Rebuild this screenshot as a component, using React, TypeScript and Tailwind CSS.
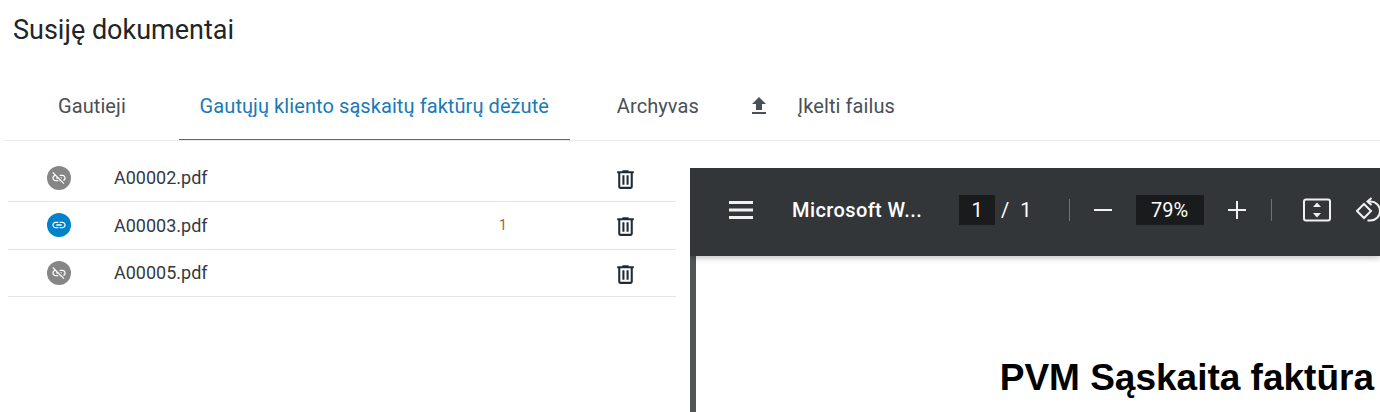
import React from "react";

const linkPath =
  "M3.9 12c0-1.71 1.39-3.1 3.1-3.1h4V7H7c-2.76 0-5 2.24-5 5s2.24 5 5 5h4v-1.9H7c-1.71 0-3.1-1.39-3.1-3.1zM8 13h8v-2H8v2zm9-6h-4v1.9h4c1.71 0 3.1 1.39 3.1 3.1s-1.39 3.1-3.1 3.1h-4V17h4c2.76 0 5-2.24 5-5s-2.24-5-5-5z";
const linkOffPath =
  "M17 7h-4v1.9h4c1.71 0 3.1 1.39 3.1 3.1 0 1.43-.98 2.63-2.31 2.98l1.46 1.46C20.88 15.61 22 13.95 22 12c0-2.76-2.24-5-5-5zm-1 4h-2.19l2 2H16zM2 4.27l3.11 3.11C3.29 8.12 2 9.91 2 12c0 2.76 2.24 5 5 5h4v-1.9H7c-1.71 0-3.1-1.39-3.1-3.1 0-1.59 1.21-2.9 2.76-3.07L8.73 11H8v2h2.73L13 15.27V17h1.73l4.01 4L20 19.74 3.27 3 2 4.27z";

const files = [
  { name: "A00002.pdf", linked: false, count: "" },
  { name: "A00003.pdf", linked: true, count: "1" },
  { name: "A00005.pdf", linked: false, count: "" },
];

const FileRow = ({ file }: { file: (typeof files)[number] }) => (
  <div className="flex h-[47.5px] items-center border-b border-[#e4e4e4]">
    <div className="ml-[39px] w-[67px]">
      <div
        className={`flex h-6 w-6 items-center justify-center rounded-full ${
          file.linked ? "bg-[#0082ca]" : "bg-[#868686]"
        }`}
      >
        <svg viewBox="0 0 24 24" className="h-4 w-4" fill="#fff">
          <path d={file.linked ? linkPath : linkOffPath} />
        </svg>
      </div>
    </div>
    <span className="w-[385px] text-[18px] text-[#343a40]">{file.name}</span>
    <span className="w-[114px] text-[14px] text-[#8a6d3b]">{file.count}</span>
    <svg viewBox="0 0 24 24" className="mt-[3px] h-[25px] w-[25px]" fill="#212b36">
      <path d="M9,3V4H4V6H5V19A2,2 0 0,0 7,21H17A2,2 0 0,0 19,19V6H20V4H15V3H9M7,6H17V19H7V6M9,8V17H11V8H9M13,8V17H15V8H13Z" />
    </svg>
  </div>
);

const PdfToolbar = () => (
  <div className="relative z-10 flex h-[88px] shrink-0 items-center bg-[#323639] pb-[4px] pl-[39px] text-white shadow-[0_2px_6px_rgba(0,0,0,0.25)]">
    <svg viewBox="0 0 24 24" className="h-6 w-6 shrink-0" fill="#f1f1f1">
      <path d="M0 3h24v3H0zM0 10.500h24v3H0zM0 18h24v3H0z" />
    </svg>
    <span className="ml-[39px] w-[164px] shrink-0 text-[20px] font-medium tracking-[0.4px] whitespace-nowrap">Microsoft W...</span>
    <span className="ml-[3px] flex h-[30px] w-9 shrink-0 items-center justify-center bg-[#191b1c] text-[20px]">1</span>
    <span className="ml-[6px] shrink-0 text-[20px]">/</span>
    <span className="ml-[11px] shrink-0 text-[20px]">1</span>
    <span className="ml-[37px] h-[22px] w-px shrink-0 bg-[#6f7275]" />
    <svg viewBox="0 0 20 20" className="ml-[23px] h-5 w-5 shrink-0" fill="#f1f1f1">
      <path d="M1 9h18v2H1z" />
    </svg>
    <span className="ml-[23px] flex h-[30px] w-[68px] shrink-0 items-center justify-center bg-[#191b1c] text-[20px]">79%</span>
    <svg viewBox="0 0 20 20" className="ml-[23px] h-5 w-5 shrink-0" fill="#f1f1f1">
      <path d="M1 9h8V1h2v8h8v2h-8v8H9v-8H1z" />
    </svg>
    <span className="ml-[24px] h-[22px] w-px shrink-0 bg-[#6f7275]" />
    <svg viewBox="0 0 28 24" className="ml-[31px] h-6 w-7 shrink-0" fill="none">
      <rect x="1" y="1.5" width="26" height="21" rx="2" stroke="#f1f1f1" strokeWidth="2" />
      <path d="M14 4.500l4 4.500h-8zM14 19.500l-4-4.500h8z" fill="#f1f1f1" />
    </svg>
    <svg viewBox="0 0 30 30" className="ml-[25px] h-[30px] w-[30px] shrink-0" fill="none" stroke="#f1f1f1" strokeWidth="2">
      <path d="M8 9l7 7-7 7-7-7z" />
      <path d="M12 6.500h2.500a9.500 9.500 0 0 1 0 19h-3" />
      <path d="M15.500 3l-4 3.500 4 3.500" />
    </svg>
  </div>
);

export default function App() {
  return (
    <div className="h-[412px] w-[1380px] overflow-hidden bg-white font-['Roboto',sans-serif]">
      <h1 className="ml-[13px] pt-[12px] text-[27px] leading-[36px] font-normal text-[#212529]">Susiję dokumentai</h1>

      <div className="mt-[24px] ml-[4px] flex h-[69px] items-center border-b border-[#e8eaec] text-[20px] tracking-[0.08px] text-[#495057]">
        <span className="ml-[54px]">Gautieji</span>
        <span className="ml-[53px] flex h-[68px] w-[391px] items-center justify-center border-b border-[#1a7ab5] text-[#1a7ab5]">
          Gautųjų kliento sąskaitų faktūrų dėžutė
        </span>
        <span className="ml-[47px]">Archyvas</span>
        <svg viewBox="0 0 24 24" className="ml-[48px] h-6 w-6" fill="#495057">
          <path d="M9 16h6v-6h4l-7-7-7 7h4v6zm-4 2h14v2H5z" />
        </svg>
        <span className="ml-[27px]">Įkelti failus</span>
      </div>

      <div className="flex">
        <div className="ml-[8px] w-[668px] pt-[13.5px]">
          {files.map((file) => (
            <FileRow key={file.name} file={file} />
          ))}
        </div>
        <div className="mt-[27px] ml-[14px] flex h-[244px] w-[690px] flex-col overflow-hidden bg-[#525659]">
          <PdfToolbar />
          <div className="ml-[6px] flex-1 bg-white pt-[99px] text-right">
            <div className="pr-[6px] font-['Liberation_Sans',sans-serif] text-[37px] leading-[46px] font-bold whitespace-nowrap text-black">
              PVM Sąskaita faktūra
            </div>
          </div>
        </div>
      </div>
    </div>
  );
}
